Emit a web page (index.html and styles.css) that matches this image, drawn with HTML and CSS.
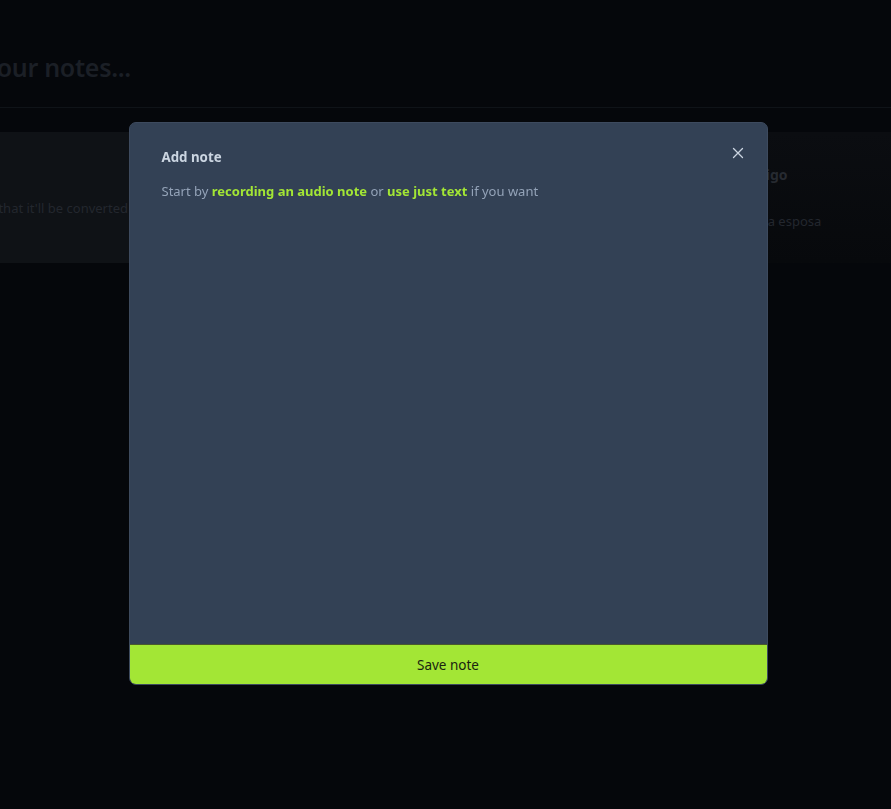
FILE: index.html
```html
<!DOCTYPE html>
<html lang="en">
<head>
<meta charset="utf-8">
<title>Notes</title>
<link rel="stylesheet" href="styles.css">
</head>
<body>
<div class="page">
  <header class="header">
    <div class="search">Search your notes...</div>
  </header>
  <section class="cards">
    <article class="card card-new">
      <p class="card-text">Record a note so that it'll be converted</p>
    </article>
    <article class="card">
      <h3 class="card-title">Reminder</h3>
      <p class="card-text">Buy groceries</p>
    </article>
    <article class="card card-dark">
      <h3 class="card-title">Hola amigo</h3>
      <p class="card-text">Llamar a la esposa</p>
    </article>
  </section>
</div>

<div class="overlay">
  <div class="modal">
    <div class="modal-body">
      <button class="close" aria-label="Close">
        <svg width="12" height="12" viewBox="0 0 12 12"><path d="M1.5 1.5 L10.5 10.5 M10.5 1.5 L1.5 10.5" stroke="#cbd5e1" stroke-width="1.3" stroke-linecap="round"/></svg>
      </button>
      <h2 class="modal-title">Add note</h2>
      <p class="modal-text">Start by <span class="hl">recording an audio note</span> or <span class="hl">use just text</span> if you want</p>
    </div>
    <button class="save">Save note</button>
  </div>
</div>
</body>
</html>
```
FILE: styles.css
```css
* { box-sizing: border-box; }
html, body {
  margin: 0;
  padding: 0;
  height: 100%;
  background: #05070b;
  font-family: "Noto Sans", "Open Sans", sans-serif;
  overflow: hidden;
}
.page {
  width: 1400px;
  margin-left: -250px;
}
.header {
  height: 108px;
  border-bottom: 1px solid #0f1318;
  display: flex;
  align-items: center;
  padding-left: 147px;
  padding-top: 26px;
}
.search {
  font-size: 25px;
  font-weight: 600;
  color: #1b1f26;
  letter-spacing: -0.3px;
}
.cards {
  display: grid;
  grid-template-columns: 450px 433px 440px;
  gap: 24px;
  margin-top: 24px;
}
.card {
  height: 131px;
  background: #0c0f13;
  padding: 34px 24px;
  border-radius: 4px;
}
.card-new {
  background: #0f1216;
  display: flex;
  align-items: center;
  padding: 21px 0 0;
  justify-content: flex-end;
}
.card-new .card-text {
  white-space: nowrap;
  flex-shrink: 0;
  margin-right: 72px;
}
.card-dark {
  background: linear-gradient(#0b0d11, #07090c);
  padding-left: 27px;
}
.card-title {
  margin: 0 0 28px;
  font-size: 14px;
  font-weight: 700;
  color: #262a31;
  line-height: 18px;
}
.card-text {
  margin: 0;
  font-size: 13px;
  color: #23272e;
  line-height: 18px;
}
.overlay {
  position: fixed;
  inset: 0;
  display: flex;
  justify-content: center;
  padding-top: 122px;
}
.modal {
  width: 639px;
  height: 563px;
  margin-left: 5px;
  background: #334155;
  border: 1px solid #3d4a5e;
  border-radius: 7px;
  display: flex;
  flex-direction: column;
  overflow: hidden;
}
.modal-body {
  flex: 1;
  position: relative;
  padding: 24px 32px;
}
.close {
  position: absolute;
  top: 23px;
  right: 22px;
  width: 14px;
  height: 14px;
  padding: 0;
  border: 0;
  background: none;
  display: flex;
  align-items: center;
  justify-content: center;
}
.modal-title {
  margin: 0;
  font-size: 13.3px;
  font-weight: 700;
  color: #cbd5e1;
  line-height: 20px;
}
.modal-text {
  margin: 14px 0 0;
  font-size: 13px;
  color: #94a3b8;
  line-height: 20px;
}
.hl {
  color: #a3e635;
  font-weight: 700;
}
.save {
  height: 40px;
  border: 0;
  border-top: 1px solid #4a5a2c;
  background: #a3e635;
  color: #1a2410;
  font-family: inherit;
  font-size: 13.5px;
  padding: 0;
}
```
